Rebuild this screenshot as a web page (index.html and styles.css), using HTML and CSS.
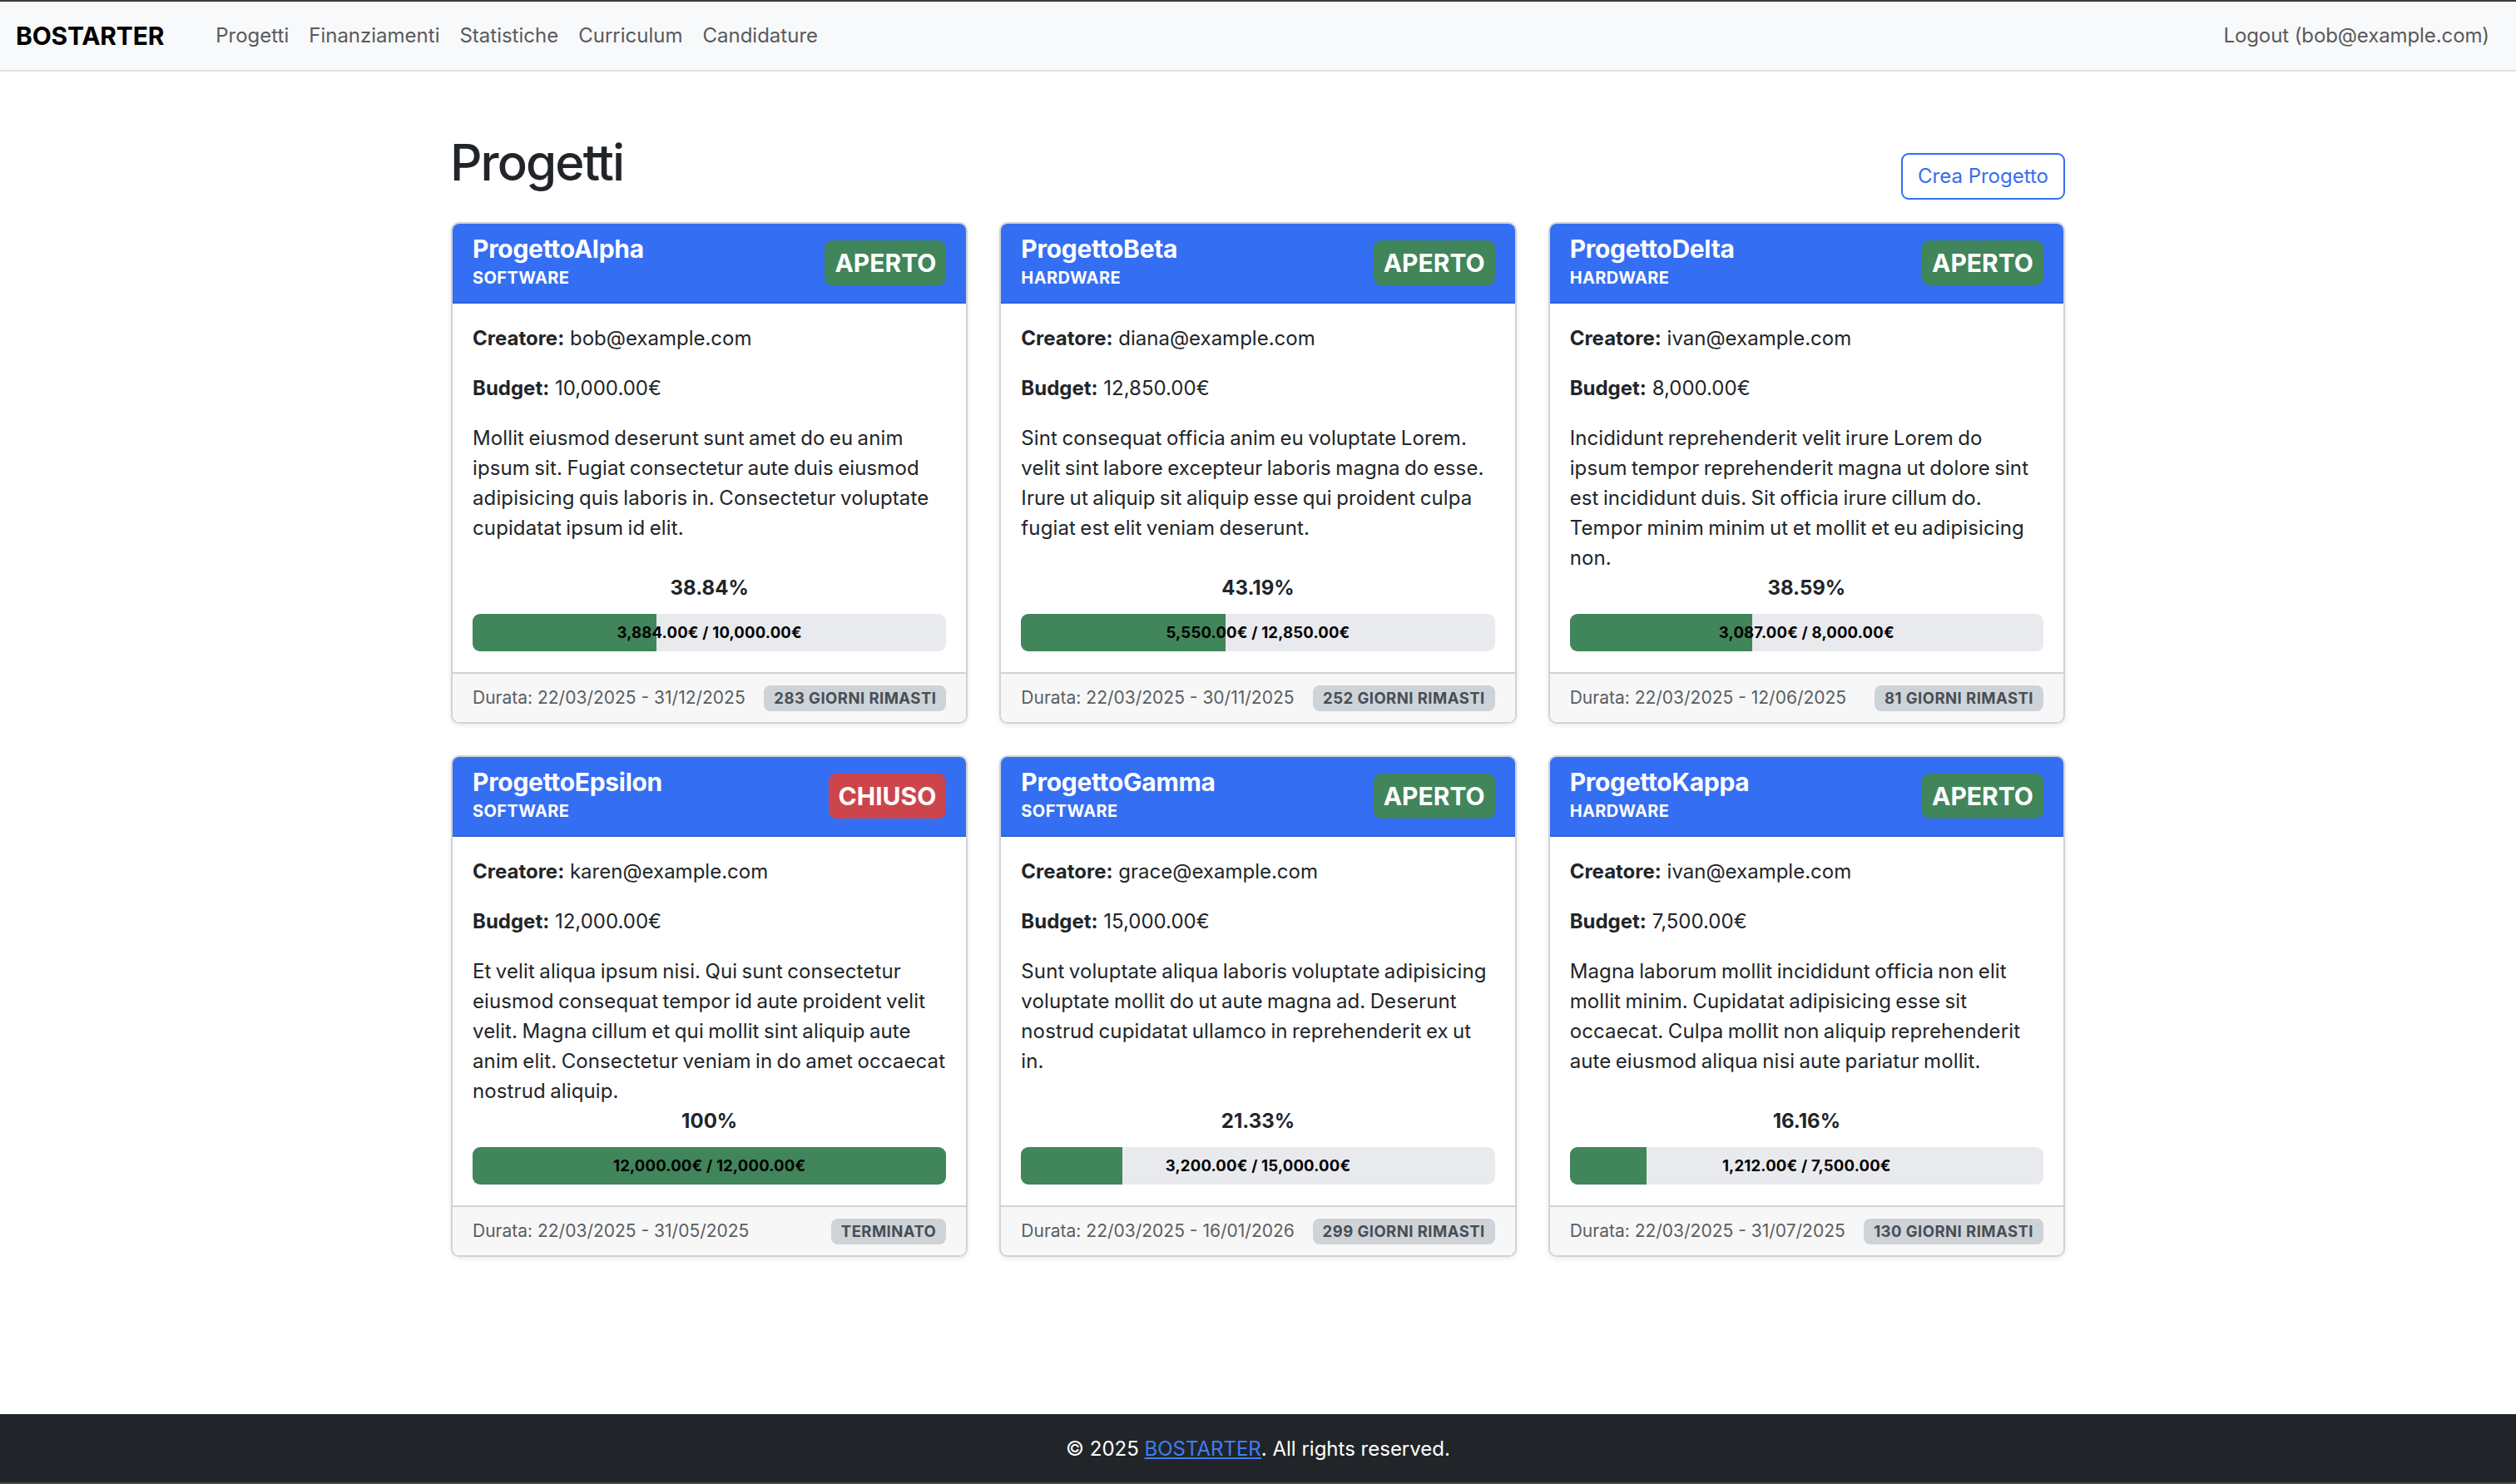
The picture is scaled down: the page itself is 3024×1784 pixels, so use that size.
FILE: index.html
```html
<!DOCTYPE html>
<html lang="it">
<head>
<meta charset="utf-8">
<title>BOSTARTER - Progetti</title>
<link rel="stylesheet" href="styles.css">
</head>
<body>
<nav class="navbar">
  <a class="brand" href="#">BOSTARTER</a>
  <ul class="nav-links">
    <li><a href="#">Progetti</a></li>
    <li><a href="#">Finanziamenti</a></li>
    <li><a href="#">Statistiche</a></li>
    <li><a href="#">Curriculum</a></li>
    <li><a href="#">Candidature</a></li>
  </ul>
  <a class="nav-logout" href="#">Logout (bob@example.com)</a>
</nav>

<main class="main">
  <div class="container">
    <div class="page-head">
      <h1 class="page-title">Progetti</h1>
      <a class="btn-outline" href="#">Crea Progetto</a>
    </div>

    <div class="grid">
      <div class="card">
        <div class="card-header">
          <div class="head-text">
            <div class="card-title">ProgettoAlpha</div>
            <div class="card-type">SOFTWARE</div>
          </div>
          <span class="state state-open">APERTO</span>
        </div>
        <div class="card-body">
          <p class="meta"><strong>Creatore:</strong> bob@example.com</p>
          <p class="meta"><strong>Budget:</strong> 10,000.00€</p>
          <p class="desc">Mollit eiusmod deserunt sunt amet do eu anim ipsum sit. Fugiat consectetur aute duis eiusmod adipisicing quis laboris in. Consectetur voluptate cupidatat ipsum id elit.</p>
          <div class="funding">
            <div class="pct">38.84%</div>
            <div class="bar"><div class="fill" style="width:38.84%"></div><span class="bar-label">3,884.00€ / 10,000.00€</span></div>
          </div>
        </div>
        <div class="card-footer">
          <span class="dates">Durata: 22/03/2025 - 31/12/2025</span>
          <span class="days">283 GIORNI RIMASTI</span>
        </div>
      </div>

      <div class="card">
        <div class="card-header">
          <div class="head-text">
            <div class="card-title">ProgettoBeta</div>
            <div class="card-type">HARDWARE</div>
          </div>
          <span class="state state-open">APERTO</span>
        </div>
        <div class="card-body">
          <p class="meta"><strong>Creatore:</strong> diana@example.com</p>
          <p class="meta"><strong>Budget:</strong> 12,850.00€</p>
          <p class="desc">Sint consequat officia anim eu voluptate Lorem. velit sint labore excepteur laboris magna do esse. Irure ut aliquip sit aliquip esse qui proident culpa fugiat est elit veniam deserunt.</p>
          <div class="funding">
            <div class="pct">43.19%</div>
            <div class="bar"><div class="fill" style="width:43.19%"></div><span class="bar-label">5,550.00€ / 12,850.00€</span></div>
          </div>
        </div>
        <div class="card-footer">
          <span class="dates">Durata: 22/03/2025 - 30/11/2025</span>
          <span class="days">252 GIORNI RIMASTI</span>
        </div>
      </div>

      <div class="card">
        <div class="card-header">
          <div class="head-text">
            <div class="card-title">ProgettoDelta</div>
            <div class="card-type">HARDWARE</div>
          </div>
          <span class="state state-open">APERTO</span>
        </div>
        <div class="card-body">
          <p class="meta"><strong>Creatore:</strong> ivan@example.com</p>
          <p class="meta"><strong>Budget:</strong> 8,000.00€</p>
          <p class="desc">Incididunt reprehenderit velit irure Lorem do ipsum tempor reprehenderit magna ut dolore sint est incididunt duis. Sit officia irure cillum do. Tempor minim minim ut et mollit et eu adipisicing non.</p>
          <div class="funding">
            <div class="pct">38.59%</div>
            <div class="bar"><div class="fill" style="width:38.59%"></div><span class="bar-label">3,087.00€ / 8,000.00€</span></div>
          </div>
        </div>
        <div class="card-footer">
          <span class="dates">Durata: 22/03/2025 - 12/06/2025</span>
          <span class="days">81 GIORNI RIMASTI</span>
        </div>
      </div>

      <div class="card">
        <div class="card-header">
          <div class="head-text">
            <div class="card-title">ProgettoEpsilon</div>
            <div class="card-type">SOFTWARE</div>
          </div>
          <span class="state state-closed">CHIUSO</span>
        </div>
        <div class="card-body">
          <p class="meta"><strong>Creatore:</strong> karen@example.com</p>
          <p class="meta"><strong>Budget:</strong> 12,000.00€</p>
          <p class="desc">Et velit aliqua ipsum nisi. Qui sunt consectetur eiusmod consequat tempor id aute proident velit velit. Magna cillum et qui mollit sint aliquip aute anim elit. Consectetur veniam in do amet occaecat nostrud aliquip.</p>
          <div class="funding">
            <div class="pct">100%</div>
            <div class="bar"><div class="fill" style="width:100%"></div><span class="bar-label">12,000.00€ / 12,000.00€</span></div>
          </div>
        </div>
        <div class="card-footer">
          <span class="dates">Durata: 22/03/2025 - 31/05/2025</span>
          <span class="days">TERMINATO</span>
        </div>
      </div>

      <div class="card">
        <div class="card-header">
          <div class="head-text">
            <div class="card-title">ProgettoGamma</div>
            <div class="card-type">SOFTWARE</div>
          </div>
          <span class="state state-open">APERTO</span>
        </div>
        <div class="card-body">
          <p class="meta"><strong>Creatore:</strong> grace@example.com</p>
          <p class="meta"><strong>Budget:</strong> 15,000.00€</p>
          <p class="desc">Sunt voluptate aliqua laboris voluptate adipisicing voluptate mollit do ut aute magna ad. Deserunt nostrud cupidatat ullamco in reprehenderit ex ut in.</p>
          <div class="funding">
            <div class="pct">21.33%</div>
            <div class="bar"><div class="fill" style="width:21.33%"></div><span class="bar-label">3,200.00€ / 15,000.00€</span></div>
          </div>
        </div>
        <div class="card-footer">
          <span class="dates">Durata: 22/03/2025 - 16/01/2026</span>
          <span class="days">299 GIORNI RIMASTI</span>
        </div>
      </div>

      <div class="card">
        <div class="card-header">
          <div class="head-text">
            <div class="card-title">ProgettoKappa</div>
            <div class="card-type">HARDWARE</div>
          </div>
          <span class="state state-open">APERTO</span>
        </div>
        <div class="card-body">
          <p class="meta"><strong>Creatore:</strong> ivan@example.com</p>
          <p class="meta"><strong>Budget:</strong> 7,500.00€</p>
          <p class="desc">Magna laborum mollit incididunt officia non elit mollit minim. Cupidatat adipisicing esse sit occaecat. Culpa mollit non aliquip reprehenderit aute eiusmod aliqua nisi aute pariatur mollit.</p>
          <div class="funding">
            <div class="pct">16.16%</div>
            <div class="bar"><div class="fill" style="width:16.16%"></div><span class="bar-label">1,212.00€ / 7,500.00€</span></div>
          </div>
        </div>
        <div class="card-footer">
          <span class="dates">Durata: 22/03/2025 - 31/07/2025</span>
          <span class="days">130 GIORNI RIMASTI</span>
        </div>
      </div>
    </div>
  </div>
</main>

<footer class="site-footer">
  © 2025 <a href="#">BOSTARTER</a>. All rights reserved.
</footer>
</body>
</html>
```

FILE: styles.css
```css
* { box-sizing: border-box; }

html, body {
  margin: 0;
  padding: 0;
}

body {
  font-family: Inter, "Liberation Sans", Arial, sans-serif;
  font-size: 24px;
  line-height: 1.5;
  color: #212529;
  background: #ffffff;
  min-height: 100vh;
  display: flex;
  flex-direction: column;
}

a { text-decoration: none; }

/* ---------- Navbar ---------- */
.navbar {
  display: flex;
  align-items: center;
  height: 86px;
  padding: 0 20px 0 19px;
  background: #f8f9fa;
  border-top: 2px solid #3a3a3a;
  border-bottom: 2px solid #dee2e6;
}

.brand {
  font-size: 30px;
  line-height: 36px;
  font-weight: 700;
  color: #000;
  margin-right: 50px;
  letter-spacing: -0.2px;
}

.nav-links {
  display: flex;
  list-style: none;
  margin: 0;
  padding: 0;
}

.nav-links a,
.nav-logout {
  display: block;
  padding: 0 12px;
  line-height: 36px;
  color: #595a5c;
}

.nav-logout {
  margin-left: auto;
  letter-spacing: -0.1px;
}

/* ---------- Main ---------- */
.main {
  flex: 1;
  padding-top: 73px;
}

.container {
  width: 1940px;
  margin: 0 auto;
}

.page-head {
  display: flex;
  justify-content: space-between;
  align-items: flex-end;
  margin-bottom: 27px;
}

.page-title {
  margin: 0 0 9px -1px;
  font-size: 60px;
  line-height: 72px;
  font-weight: 500;
  color: #212529;
  letter-spacing: -1.9px;
}

.btn-outline {
  display: inline-block;
  padding: 8px 18px;
  border: 2px solid #346ef2;
  border-radius: 9px;
  color: #346ef2;
  line-height: 36px;
}

/* ---------- Grid of cards ---------- */
.grid {
  display: grid;
  grid-template-columns: repeat(3, 1fr);
  gap: 38px;
}

.card {
  display: flex;
  flex-direction: column;
  border: 2px solid #d2d3d5;
  border-radius: 10px;
  overflow: hidden;
  background: #fff;
  box-shadow: 0 2px 6px rgba(0, 0, 0, 0.09);
}

.card-header {
  display: flex;
  justify-content: space-between;
  align-items: center;
  padding: 12px 24px 13px;
  background: #346ef2;
  color: #fff;
  border-bottom: 2px solid #2f62d6;
}

.card-title {
  font-size: 30px;
  line-height: 36px;
  font-weight: 700;
  letter-spacing: -0.3px;
}

.card-type {
  margin-top: 2px;
  font-size: 20px;
  line-height: 31px;
  font-weight: 700;
  letter-spacing: 0.4px;
}

.state {
  display: inline-block;
  padding: 12px 12px;
  border-radius: 9px;
  font-size: 30px;
  line-height: 30px;
  font-weight: 700;
  color: #fff;
}

.state-open { background: #41855a; }
.state-closed { background: #cc454b; }

.card-body {
  flex: 1;
  display: flex;
  flex-direction: column;
  padding: 24px 24px 25px;
}

.meta {
  margin: 0 0 24px;
}

.meta strong { font-weight: 700; }

.desc {
  margin: 0;
  letter-spacing: 0.115px;
  word-spacing: -1.5px;
}

.funding {
  margin-top: auto;
}

.pct {
  text-align: center;
  font-weight: 700;
  line-height: 36px;
  margin-bottom: 13px;
}

.bar {
  position: relative;
  height: 45px;
  border-radius: 9px;
  background: #e9eaee;
  overflow: hidden;
}

.fill {
  height: 100%;
  background: #41855a;
}

.bar-label {
  position: absolute;
  left: 0;
  right: 0;
  top: 0;
  text-align: center;
  font-size: 18.5px;
  line-height: 45px;
  font-weight: 700;
  color: #000;
  letter-spacing: 0.2px;
}

.card-footer {
  display: flex;
  justify-content: space-between;
  align-items: center;
  min-height: 60px;
  padding: 10px 24px;
  background: #f7f7f7;
  border-top: 2px solid #d3d3d3;
}

.dates {
  font-size: 21px;
  color: #595e63;
}

.days {
  display: inline-block;
  padding: 0 12px;
  border-radius: 8px;
  background: #ced3d8;
  color: #484d53;
  font-size: 18.5px;
  line-height: 31px;
  font-weight: 700;
  letter-spacing: 0.45px;
}

/* ---------- Footer ---------- */
.site-footer {
  background: #212529;
  color: #fff;
  text-align: center;
  padding: 24px 0 22px;
  line-height: 36px;
  border-bottom: 2px solid #4a4a4a;
}

.site-footer a {
  color: #3d7ff2;
  text-decoration: underline;
}
```
